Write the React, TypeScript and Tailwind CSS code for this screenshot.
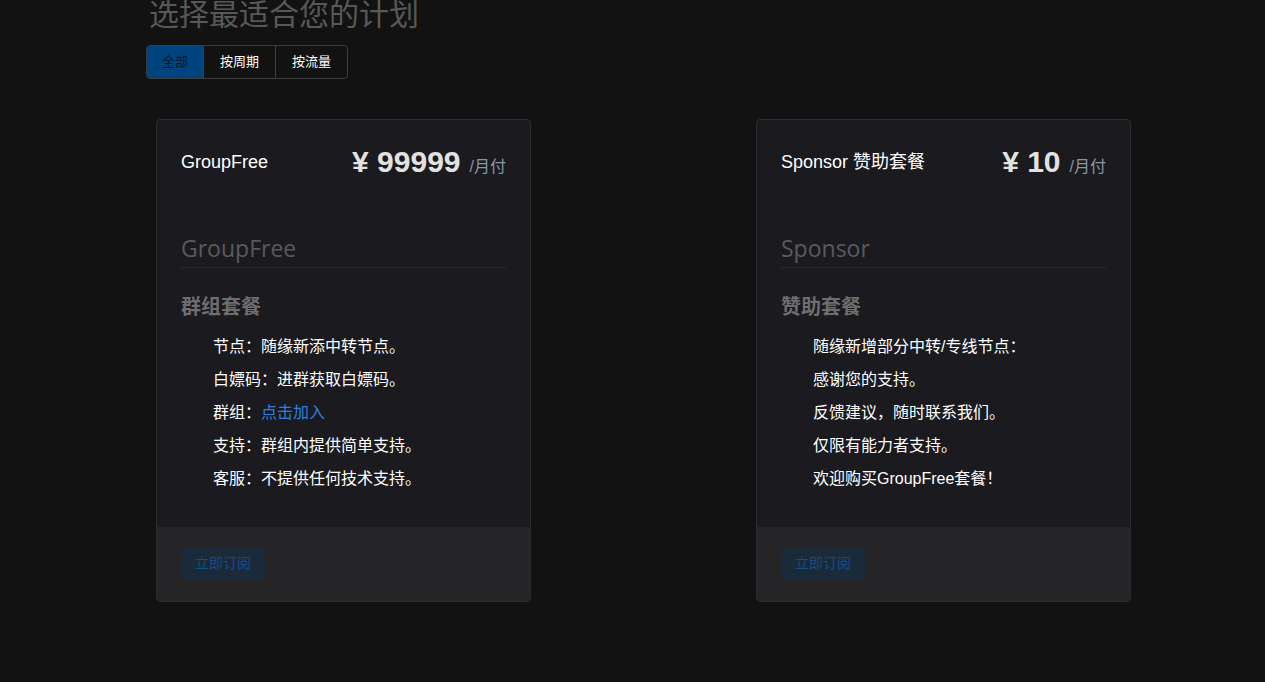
const cjk = "font-['Liberation_Sans','Noto_Sans_CJK_SC',sans-serif]";

type Plan = {
  name: string;
  price: string;
  heading: string;
  sub: string;
  items: React.ReactNode[];
};

const plans: Plan[] = [
  {
    name: "GroupFree",
    price: "99999",
    heading: "GroupFree",
    sub: "群组套餐",
    items: [
      "节点：随缘新添中转节点。",
      "白嫖码：进群获取白嫖码。",
      <>
        群组：<a href="#" className="text-[#2f7ee0]">点击加入</a>
      </>,
      "支持：群组内提供简单支持。",
      "客服：不提供任何技术支持。",
    ],
  },
  {
    name: "Sponsor 赞助套餐",
    price: "10",
    heading: "Sponsor",
    sub: "赞助套餐",
    items: [
      "随缘新增部分中转/专线节点：",
      "感谢您的支持。",
      "反馈建议，随时联系我们。",
      "仅限有能力者支持。",
      "欢迎购买GroupFree套餐！",
    ],
  },
];

function PlanCard({ plan }: { plan: Plan }) {
  return (
    <div className="w-[375px] rounded-[4px] border border-[#2b2b30] bg-[#1a1a1f] overflow-hidden">
      <div className="px-[24px] pt-[24px] pb-[32px]">
        <div className="flex h-[36px] items-center justify-between">
          <span className="text-[18px] text-white">{plan.name}</span>
          <div className="flex items-baseline">
            <span className="text-[30px] font-bold leading-[36px] text-[#e2e2e2]">¥ {plan.price}</span>
            <span className="ml-[9px] text-[16px] text-[#8b96a3]">/月付</span>
          </div>
        </div>
        <div className="mt-[52px] border-b border-[#2a2a2f] pb-[3px]">
          <h2 className="font-['Open_Sans','Noto_Sans_CJK_SC',sans-serif] text-[23px] font-medium leading-[32px] text-[#5a5a5a]">
            {plan.heading}
          </h2>
        </div>
        <h3 className="mt-[25px] text-[20px] font-bold leading-[28px] text-[#6e6e6e]">{plan.sub}</h3>
        <ul className="mt-[9px] pl-[32px]">
          {plan.items.map((it, i) => (
            <li key={i} className="text-[16px] leading-[33px] text-white">
              {it}
            </li>
          ))}
        </ul>
      </div>
      <div className="bg-[#252528] px-[24px] pt-[20px] pb-[21px]">
        <button className="h-[33px] rounded-[3px] bg-[#1b2a39] px-[14px] text-[14px] text-[#0f4e8c]">
          立即订阅
        </button>
      </div>
    </div>
  );
}

export default function App() {
  return (
    <div className={`min-h-[685px] bg-[#121212] ${cjk}`}>
      <div className="pl-[146px]">
        <h1 className="ml-[3px] mt-[-3px] text-[30px] leading-[36px] text-[#585858]">选择最适合您的计划</h1>
        <div className="mt-[12px] inline-flex h-[34px] overflow-hidden rounded-[4px] border border-[#3c3c3c] text-[13px]">
          <button className="bg-[#00447f] px-[15px] text-[#0a1626]">全部</button>
          <button className="border-l border-[#3c3c3c] px-[16px] text-white">按周期</button>
          <button className="border-l border-[#3c3c3c] px-[16px] text-white">按流量</button>
        </div>
      </div>
      <div className="mt-[40px] flex gap-[225px] pl-[156px]">
        {plans.map((p) => (
          <PlanCard key={p.name} plan={p} />
        ))}
      </div>
    </div>
  );
}
